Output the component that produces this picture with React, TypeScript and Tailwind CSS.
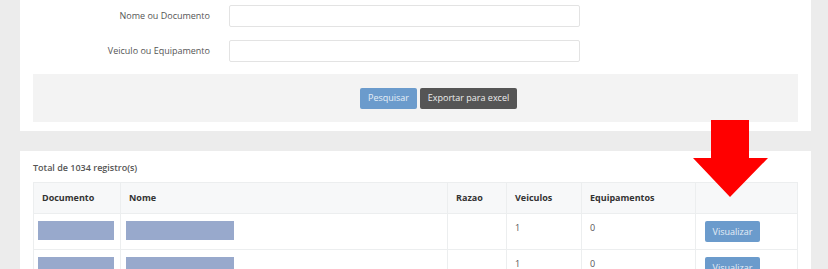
const rows = [
  { veiculos: 1, equipamentos: 0 },
  { veiculos: 1, equipamentos: 0 },
];

function Field({ label }: { label: string }) {
  return (
    <div className="flex items-center">
      <label className="w-[190px] text-right text-[9px] text-[#555]">{label}</label>
      <input className="ml-[19px] h-[22px] w-[351px] rounded-[2px] border border-[#e3e3e3] bg-white" />
    </div>
  );
}

export default function App() {
  return (
    <div className="relative h-[269px] overflow-hidden bg-[#ececec] pl-[20px] pr-[17px] font-['Open_Sans',sans-serif]">
      <div className="flex flex-col gap-[13px] bg-white pt-[5px] pb-[9px]">
        <Field label="Nome ou Documento" />
        <Field label="Veiculo ou Equipamento" />
        <div className="mx-[13px] mt-[-1px] flex h-[48px] items-center gap-[3px] bg-[#f3f3f3] pl-[327px]">
          <button className="h-[21px] w-[57px] rounded-[2px] bg-[#6b9bcc] text-[9px] text-[#e6eef7]">Pesquisar</button>
          <button className="h-[21px] w-[97px] rounded-[2px] bg-[#555555] text-[9px] text-[#eeeeee]">
            Exportar para excel
          </button>
        </div>
      </div>

      <div className="mt-[20px] bg-white px-[13px] pt-[9px]">
        <p className="text-[9px] font-semibold leading-[16px] text-[#555]">Total de 1034 registro(s)</p>
        <table className="mt-[6px] w-[764px] table-fixed border-collapse text-[9px] text-[#555]">
          <colgroup>
            <col className="w-[87px]" />
            <col className="w-[327px]" />
            <col className="w-[59px]" />
            <col className="w-[75px]" />
            <col className="w-[114px]" />
            <col className="w-[102px]" />
          </colgroup>
          <thead>
            <tr className="h-[31px] bg-[#f7f8f9] text-left font-bold text-[#333]">
              <th className="border border-[#eceeef] px-[8px]">Documento</th>
              <th className="border border-[#eceeef] px-[8px]">Nome</th>
              <th className="border border-[#eceeef] px-[8px]">Razao</th>
              <th className="border border-[#eceeef] px-[8px]">Veiculos</th>
              <th className="border border-[#eceeef] px-[8px]">Equipamentos</th>
              <th className="border border-[#eceeef] px-[8px]"></th>
            </tr>
          </thead>
          <tbody>
            {rows.map((r, i) => (
              <tr key={i} className="h-[36px] align-top">
                <td className="border border-[#eceeef] pl-[4px] pt-[7px]">
                  <div className="h-[19px] w-[76px] bg-[#98a9cc]" />
                </td>
                <td className="border border-[#eceeef] pl-[5px] pt-[7px]">
                  <div className="h-[19px] w-[108px] bg-[#98a9cc]" />
                </td>
                <td className="border border-[#eceeef]"></td>
                <td className="border border-[#eceeef] px-[8px] pt-[7px] leading-[14px]">{r.veiculos}</td>
                <td className="border border-[#eceeef] px-[8px] pt-[7px] leading-[14px]">{r.equipamentos}</td>
                <td className="border border-[#eceeef] pl-[9px] pt-[7px]">
                  <button className="h-[21px] w-[55px] rounded-[2px] bg-[#6b9bcc] text-[9px] text-[#e6eef7]">
                    Visualizar
                  </button>
                </td>
              </tr>
            ))}
          </tbody>
        </table>
      </div>

      <svg className="absolute left-[692px] top-[120px]" width="77" height="78" viewBox="0 0 77 78">
        <polygon points="19,0 57,0 57,38 76,38 38,77 1,38 19,38" fill="#ff0000" />
      </svg>
    </div>
  );
}
